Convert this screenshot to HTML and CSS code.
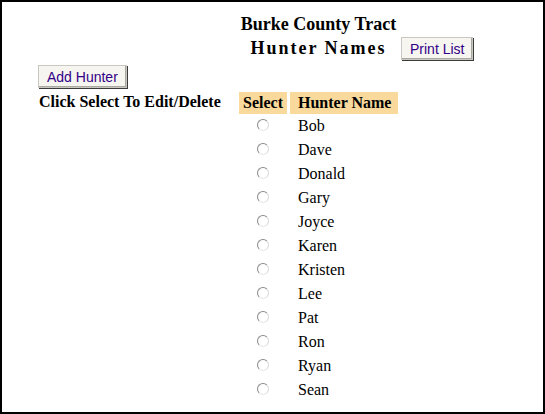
FILE: index.html
```html
<!DOCTYPE html>
<html lang="en">
<head>
  <meta charset="UTF-8">
  <title>Hunter Names</title>
  <link rel="stylesheet" href="styles.css">
</head>
<body>
  <div class="marco">
    <div class="pagina">
      <h1 class="titulo">Burke County Tract</h1>

      <h2 class="subtitulo">Hunter Names</h2>
      <div class="celda-imprimir">
        <button class="boton">Print List</button>
      </div>

      <div class="celda-agregar">
        <button class="boton">Add Hunter</button>
      </div>

      <p class="aviso">Click Select To Edit/Delete</p>

      <table class="lista">
        <thead>
          <tr>
            <th class="col-select">Select</th>
            <th class="col-nombre">Hunter Name</th>
          </tr>
        </thead>
        <tbody>
          <tr><td class="col-select"><span class="radio"></span></td><td class="col-nombre">Bob</td></tr>
          <tr><td class="col-select"><span class="radio"></span></td><td class="col-nombre">Dave</td></tr>
          <tr><td class="col-select"><span class="radio"></span></td><td class="col-nombre">Donald</td></tr>
          <tr><td class="col-select"><span class="radio"></span></td><td class="col-nombre">Gary</td></tr>
          <tr><td class="col-select"><span class="radio"></span></td><td class="col-nombre">Joyce</td></tr>
          <tr><td class="col-select"><span class="radio"></span></td><td class="col-nombre">Karen</td></tr>
          <tr><td class="col-select"><span class="radio"></span></td><td class="col-nombre">Kristen</td></tr>
          <tr><td class="col-select"><span class="radio"></span></td><td class="col-nombre">Lee</td></tr>
          <tr><td class="col-select"><span class="radio"></span></td><td class="col-nombre">Pat</td></tr>
          <tr><td class="col-select"><span class="radio"></span></td><td class="col-nombre">Ron</td></tr>
          <tr><td class="col-select"><span class="radio"></span></td><td class="col-nombre">Ryan</td></tr>
          <tr><td class="col-select"><span class="radio"></span></td><td class="col-nombre">Sean</td></tr>
        </tbody>
      </table>
    </div>
  </div>
</body>
</html>
```

FILE: styles.css
```css
body {
  margin: 0;
  font-family: 'Liberation Serif', 'Times New Roman', serif;
  color: #000;
  background: #fff;
}

.marco {
  box-sizing: border-box;
  width: 545px;
  height: 414px;
  border: 2px solid #000;
  overflow: hidden;
}

.pagina {
  display: grid;
  grid-template-columns: 199px 163px auto;
  padding: 11px 0 0 36px;
  align-items: center;
}

.titulo {
  grid-column: 2;
  margin: 0;
  font-size: 18px;
  line-height: 22px;
  text-align: center;
  white-space: nowrap;
}

.subtitulo {
  grid-column: 2;
  margin: 0;
  font-size: 18px;
  line-height: 23px;
  letter-spacing: 2px;
  text-align: center;
  white-space: nowrap;
  padding-top: 2px;
}

.celda-imprimir {
  grid-column: 3;
  padding: 2px 0 0 1px;
}

.celda-agregar {
  grid-column: 1;
  padding-top: 5px;
}

.boton {
  font-family: 'Liberation Sans', Arial, sans-serif;
  font-size: 14px;
  color: #330088;
  background: #f6f5ef;
  height: 23px;
  padding: 0 8px;
  border: 1px solid;
  border-color: #fff #6e6e6e #6e6e6e #fff;
  box-shadow: 1px 1px 0 #3c3c3c, inset -1px -1px 0 #a9a9a2;
  outline: 1px solid #c8c8c0;
  outline-offset: -1px;
}

.aviso {
  grid-column: 1;
  align-self: start;
  margin: 0;
  padding: 5px 0 0 1px;
  font-size: 16px;
  font-weight: bold;
  white-space: nowrap;
}

.lista {
  grid-column: 2;
  align-self: start;
  table-layout: fixed;
  width: 165px;
  border-collapse: separate;
  border-spacing: 3px 0;
  margin: 4px 0 0 -1px;
  font-size: 16px;
}

.lista th {
  background: #f9da9c;
  height: 22px;
  padding: 0;
  font-weight: bold;
  white-space: nowrap;
}

.lista td {
  height: 24px;
  padding: 0;
}

.lista th.col-select {
  width: 48px;
  text-align: center;
}

.lista td.col-select {
  text-align: center;
}

.lista th.col-nombre {
  width: 100px;
  padding: 0 0 0 8px;
  text-align: left;
}

.lista td.col-nombre {
  padding-left: 8px;
}

.radio {
  display: inline-block;
  box-sizing: border-box;
  width: 12px;
  height: 12px;
  border-radius: 50%;
  border: 1px solid;
  border-color: #8a8a8a #d8d8d8 #e8e8e8 #8a8a8a;
  background: #fff;
  vertical-align: 0;
}
```
